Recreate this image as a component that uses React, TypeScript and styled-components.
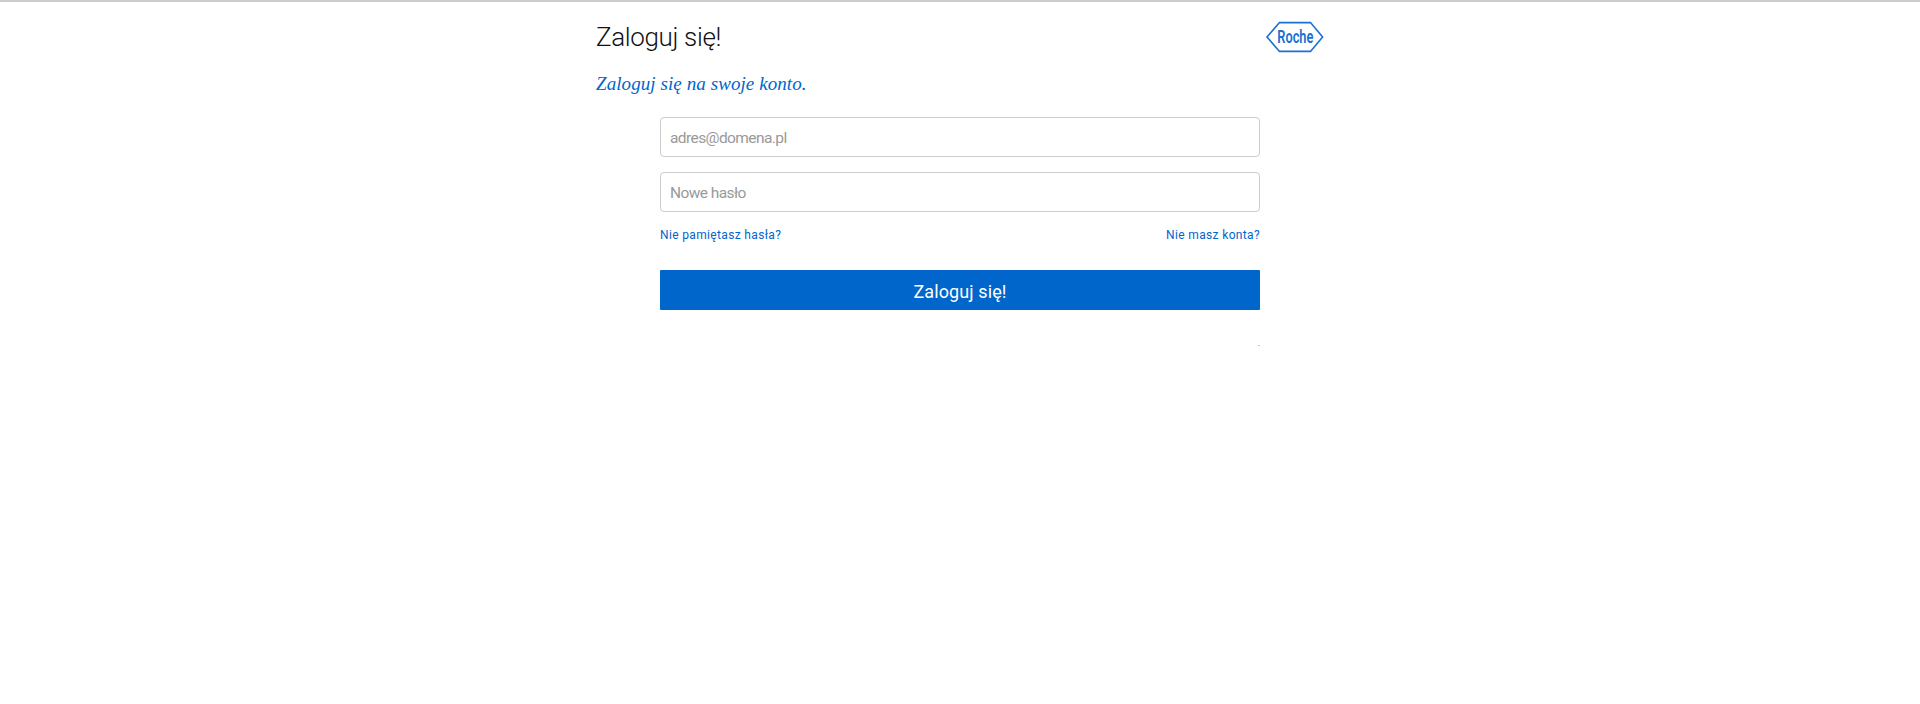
import React from 'react';
import styled, { createGlobalStyle } from 'styled-components';

const GlobalStyle = createGlobalStyle`
  *, *::before, *::after { box-sizing: border-box; }
  body { margin: 0; background: #fff; font-family: Roboto, "Liberation Sans", Arial, sans-serif; }
`;

const Page = styled.div`
  min-height: 704px;
  border-top: 2px solid #ccc;
`;

const Container = styled.main`
  width: 728px;
  margin: 0 auto;
  padding-top: 17px;
`;

const Header = styled.header`
  display: flex;
  justify-content: space-between;
  align-items: center;
  height: 36px;
`;

const Title = styled.h1`
  margin: 0;
  font-size: 26px;
  line-height: 36px;
  font-weight: 300;
  letter-spacing: -0.35px;
  color: #111;
`;

const Logo = styled.svg`
  display: block;
  width: 58px;
  height: 32px;
  overflow: visible;
`;

const Subtitle = styled.h2`
  margin: 14px 0 0;
  font-family: "Liberation Serif", "Times New Roman", serif;
  font-style: italic;
  font-weight: 400;
  font-size: 19px;
  line-height: 30px;
  letter-spacing: 0.08px;
  color: #06c;
`;

const Form = styled.form`
  width: 600px;
  margin: 18px auto 0;
  display: flex;
  flex-direction: column;
`;

const Field = styled.input`
  width: 100%;
  height: 40px;
  margin-bottom: 15px;
  padding: 1px 9px 0;
  border: 1px solid #ccc;
  border-radius: 4px;
  background: #fff;
  font: 400 15.5px Roboto, "Liberation Sans", Arial, sans-serif;
  letter-spacing: -0.58px;
  outline: none;
  &::placeholder { color: #999; opacity: 1; }
`;

const Links = styled.nav`
  display: flex;
  justify-content: space-between;
  height: 16px;
`;

const TextLink = styled.a`
  font-size: 12px;
  line-height: 16px;
  letter-spacing: 0.35px;
  color: #06c;
  text-decoration: none;
`;

const Submit = styled.button`
  height: 40px;
  margin-top: 27px;
  padding: 3px 0 0;
  border: 0;
  border-radius: 1px;
  background: #06c;
  color: #fff;
  font: 400 18px Roboto, "Liberation Sans", Arial, sans-serif;
  letter-spacing: 0.1px;
`;

const Footnote = styled.small`
  margin-top: 27px;
  text-align: right;
  font-size: 9px;
  line-height: 12px;
  color: #555;
`;

export default function App() {
  return (
    <Page>
      <GlobalStyle />
      <Container>
        <Header>
          <Title>Zaloguj się!</Title>
          <Logo viewBox="0 0 58 32" role="img" aria-label="Roche">
            <path d="M13.5 1.6H44.5L56.6 16L44.5 30.4H13.5L1 16Z" fill="none" stroke="#1a70d2" strokeWidth="1.6" />
            <text x="11.3" y="22" textLength="36" lengthAdjust="spacingAndGlyphs" fontFamily="Roboto, Liberation Sans, sans-serif" fontSize="17.5" fontWeight="600" fill="#1a70d2">Roche</text>
          </Logo>
        </Header>
        <Subtitle>Zaloguj się na swoje konto.</Subtitle>
        <Form onSubmit={(e) => e.preventDefault()}>
          <Field type="email" placeholder="adres@domena.pl" />
          <Field type="password" placeholder="Nowe hasło" />
          <Links>
            <TextLink href="#">Nie pamiętasz hasła?</TextLink>
            <TextLink href="#">Nie masz konta?</TextLink>
          </Links>
          <Submit type="submit">Zaloguj się!</Submit>
          <Footnote>.</Footnote>
        </Form>
      </Container>
    </Page>
  );
}
